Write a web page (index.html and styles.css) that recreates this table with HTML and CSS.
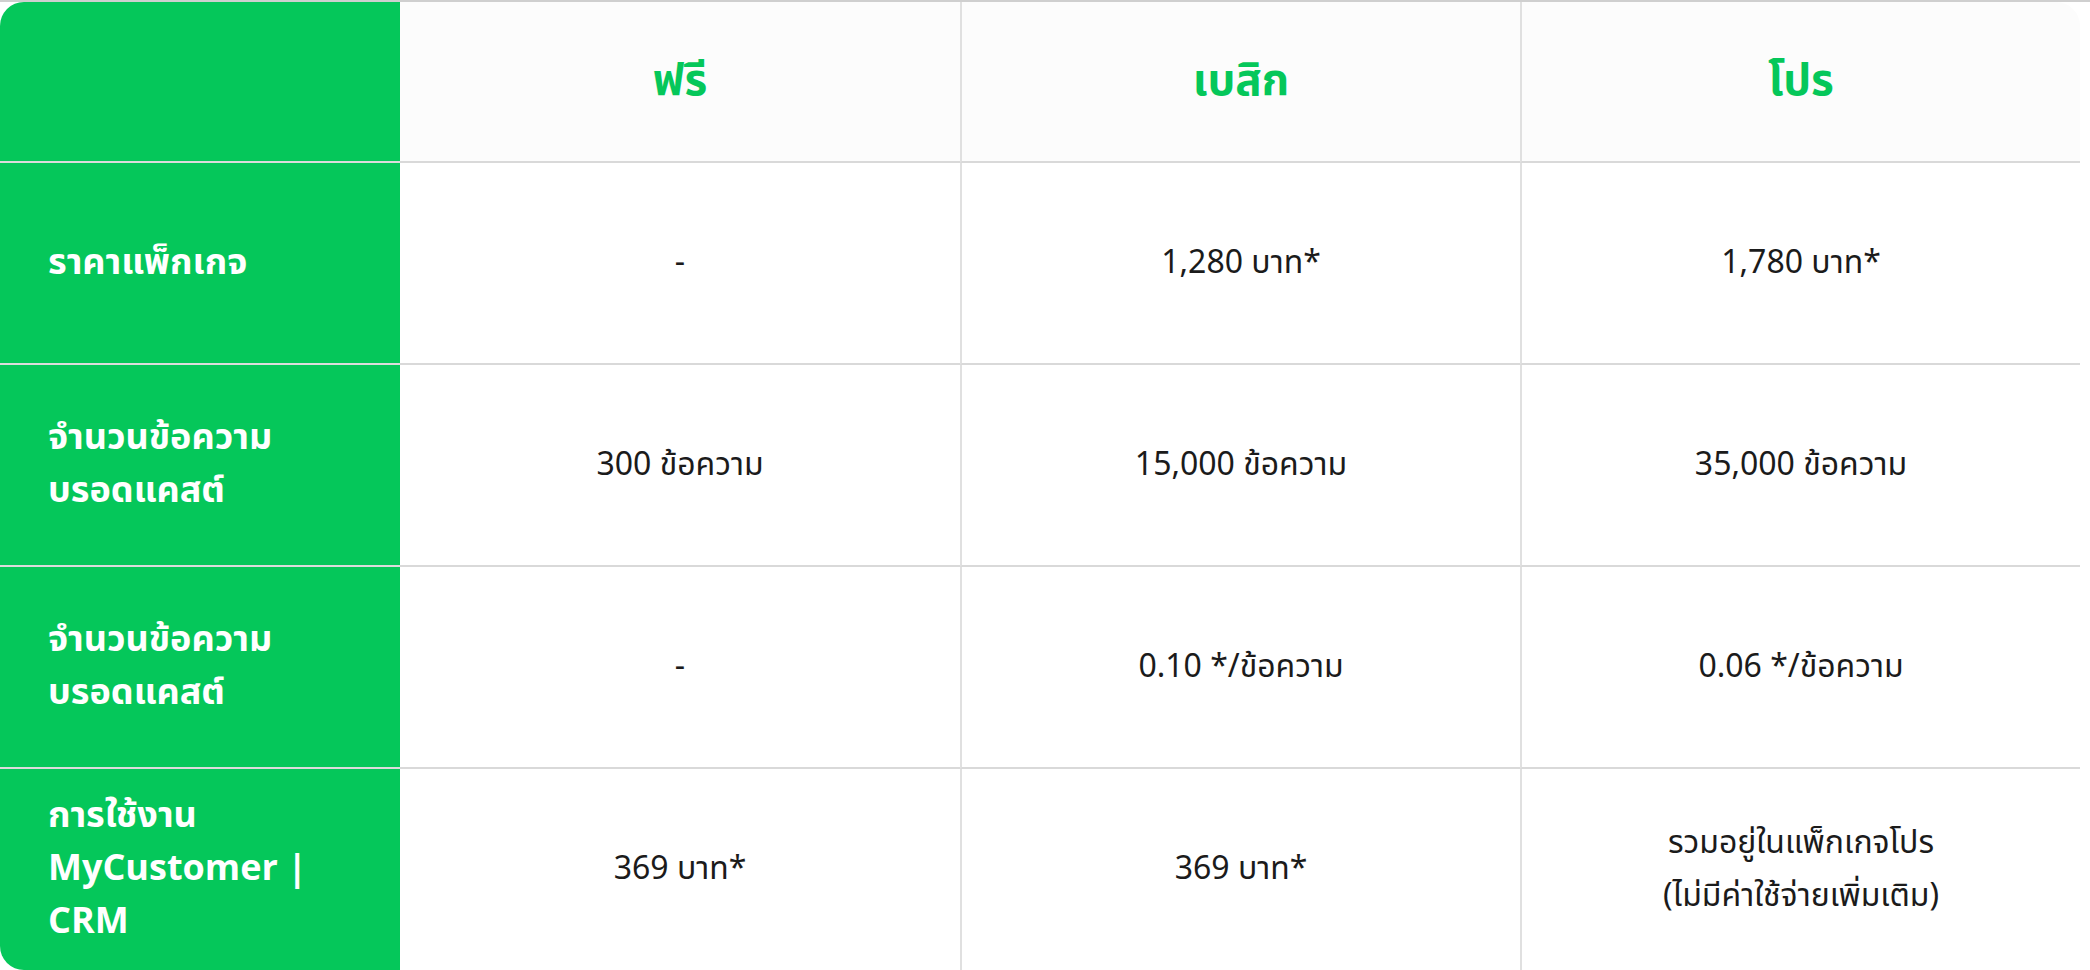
FILE: index.html
```html
<!DOCTYPE html>
<html lang="th">
<head>
<meta charset="utf-8">
<title>Package comparison</title>
<link rel="stylesheet" href="styles.css">
</head>
<body>
<div class="page">
  <div class="table">
    <div class="cell label head-label"></div>
    <div class="cell head">ฟรี</div>
    <div class="cell head sep">เบสิก</div>
    <div class="cell head sep">โปร</div>

    <div class="cell label">ราคาแพ็กเกจ</div>
    <div class="cell data">-</div>
    <div class="cell data sep">1,280 บาท*</div>
    <div class="cell data sep">1,780 บาท*</div>

    <div class="cell label">จำนวนข้อความ<br>บรอดแคสต์</div>
    <div class="cell data">300 ข้อความ</div>
    <div class="cell data sep">15,000 ข้อความ</div>
    <div class="cell data sep">35,000 ข้อความ</div>

    <div class="cell label">จำนวนข้อความ<br>บรอดแคสต์</div>
    <div class="cell data">-</div>
    <div class="cell data sep">0.10 */ข้อความ</div>
    <div class="cell data sep">0.06 */ข้อความ</div>

    <div class="cell label last">การใช้งาน<br>MyCustomer |<br>CRM</div>
    <div class="cell data last">369 บาท*</div>
    <div class="cell data sep last">369 บาท*</div>
    <div class="cell data sep last">รวมอยู่ในแพ็กเกจโปร<br>(ไม่มีค่าใช้จ่ายเพิ่มเติม)</div>
  </div>
</div>
</body>
</html>
```

FILE: styles.css
```css
html, body {
  margin: 0;
  padding: 0;
  background: #ffffff;
}

body {
  font-family: "Noto Sans Thai", "Inter", "Noto Sans", sans-serif;
  color: #1b1b1b;
}

.page {
  width: 2090px;
  height: 968px;
  border-top: 2px solid #cfcfcf;
  overflow: hidden;
}

.table {
  width: 2080px;
  display: grid;
  grid-template-columns: 400px 1fr 1fr 1fr;
  grid-template-rows: 161px 202px 202px 202px 201px;
  border-radius: 24px;
  overflow: hidden;
}

.cell {
  display: flex;
  align-items: center;
  border-bottom: 2px solid #d9d9d9;
}

.cell.last {
  border-bottom: none;
}

.label {
  background: #05c75a;
  color: #ffffff;
  font-weight: 700;
  font-size: 36px;
  line-height: 53px;
  padding-left: 48px;
  border-bottom-color: #dcdcdc;
}

.head {
  background: #fcfcfc;
  justify-content: center;
  color: #05c75a;
  font-weight: 700;
  font-size: 44px;
}

.data {
  justify-content: center;
  text-align: center;
  font-size: 32px;
  line-height: 53px;
  font-weight: 400;
}

.sep {
  border-left: 2px solid #e0e0e0;
}
```
